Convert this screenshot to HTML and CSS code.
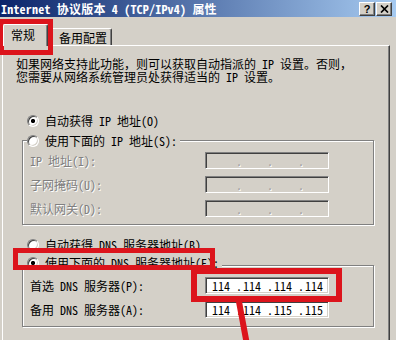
FILE: index.html
```html
<!DOCTYPE html>
<html lang="zh-CN">
<head>
<meta charset="utf-8">
<title>Internet 协议版本 4 (TCP/IPv4) 属性</title>
<link rel="stylesheet" href="styles.css">
</head>
<body>
<div class="win">
  <div class="titlebar">
    <span class="title">Internet 协议版本 4 (TCP/IPv4) 属性</span>
    <div class="tbtns">
      <span class="tbtn help">?</span>
      <span class="tbtn close"><svg width="9" height="8" viewBox="0 0 9 8"><path d="M1 0.5L8 7.5M8 0.5L1 7.5" stroke="#000" stroke-width="1.7" fill="none"/></svg></span>
    </div>
  </div>
  <div class="tabs">
    <div class="tab active">常规</div>
    <div class="tab">备用配置</div>
  </div>
  <div class="panel">
    <p class="intro">如果网络支持此功能，则可以获取自动指派的 IP 设置。否则，<br>您需要从网络系统管理员处获得适当的 IP 设置。</p>
    <div class="opt first"><span class="radio checked"></span>自动获得 IP 地址(O)</div>
    <fieldset class="group g1">
      <legend><div class="opt"><span class="radio"></span>使用下面的 IP 地址(S):</div></legend>
      <div class="rows">
        <div class="row dis"><span class="lbl">IP 地址(I):</span>
          <div class="ip off"><span class="f1"></span><span class="dot">.</span><span class="f"></span><span class="dot">.</span><span class="f"></span><span class="dot">.</span><span class="f"></span></div></div>
        <div class="row dis"><span class="lbl">子网掩码(U):</span>
          <div class="ip off"><span class="f1"></span><span class="dot">.</span><span class="f"></span><span class="dot">.</span><span class="f"></span><span class="dot">.</span><span class="f"></span></div></div>
        <div class="row dis"><span class="lbl">默认网关(D):</span>
          <div class="ip off"><span class="f1"></span><span class="dot">.</span><span class="f"></span><span class="dot">.</span><span class="f"></span><span class="dot">.</span><span class="f"></span></div></div>
      </div>
    </fieldset>
    <div class="opt second"><span class="radio"></span>自动获得 DNS 服务器地址(B)</div>
    <fieldset class="group g2">
      <legend><div class="opt"><span class="radio checked"></span>使用下面的 DNS 服务器地址(E):</div></legend>
      <div class="rows">
        <div class="row"><span class="lbl">首选 DNS 服务器(P):</span>
          <div class="ip"><span class="f1">114</span><span class="dot">.</span><span class="f">114</span><span class="dot">.</span><span class="f">114</span><span class="dot">.</span><span class="f">114</span></div></div>
        <div class="row"><span class="lbl">备用 DNS 服务器(A):</span>
          <div class="ip"><span class="f1">114</span><span class="dot">.</span><span class="f">114</span><span class="dot">.</span><span class="f">115</span><span class="dot">.</span><span class="f">115</span></div></div>
      </div>
    </fieldset>
  </div>
  <svg class="marks" width="396" height="340" viewBox="0 0 396 340">
    <g fill="none" stroke="#dc141c">
      <rect x="1.5" y="21.5" width="49" height="31" stroke-width="5"/>
      <rect x="15.5" y="250.5" width="197" height="17" stroke-width="5"/>
      <rect x="194" y="271" width="145" height="28" stroke-width="6"/>
      <line x1="238.5" y1="299" x2="246.5" y2="342" stroke-width="6"/>
    </g>
  </svg>
</div>
</body>
</html>
```
FILE: styles.css
```css
* { box-sizing: border-box; }
html, body { margin: 0; padding: 0; }
body {
  width: 396px;
  height: 340px;
  overflow: hidden;
  background: #d4d0c8;
  color: #000;
  font: 12px/13px "Noto Sans Mono CJK SC", "Noto Sans CJK SC", sans-serif;
}
.win { position: relative; width: 396px; height: 340px; overflow: hidden; }

.titlebar {
  height: 17px;
  display: flex;
  align-items: center;
  justify-content: space-between;
  padding: 0 4px 0 1px;
  background: linear-gradient(to right, #0a246a, #a6caf0);
}
.title { color: #fff; font-weight: bold; white-space: nowrap; letter-spacing: 0.2px; }
.tbtns { display: flex; gap: 1px; }
.tbtn {
  width: 16px;
  height: 14px;
  display: flex;
  align-items: center;
  justify-content: center;
  background: #d4d0c8;
  border: 1px solid;
  border-color: #fff #404040 #404040 #fff;
  box-shadow: inset -1px -1px 0 #808080;
  font: bold 11px/12px "Liberation Sans", sans-serif;
}

.tabs { display: flex; align-items: flex-end; height: 28px; padding-left: 3px; }
.tab {
  height: 17px;
  padding: 2px 4px 0 10px;
  line-height: 13px;
  white-space: nowrap;
  border-top: 1px solid #fff;
  border-left: 1px solid #fff;
  border-right: 1px solid #404040;
  box-shadow: inset -1px 0 0 #808080;
  border-radius: 2px 2px 0 0;
  background: #d4d0c8;
}
.tab.active {
  position: relative;
  z-index: 1;
  height: 22px;
  margin-bottom: -1px;
  padding: 3px 12px 0 7px;
}

.panel {
  margin-left: 2px;
  width: 388px;
  height: 296px;
  border-top: 1px solid #fff;
  border-left: 1px solid #fff;
  border-right: 1px solid #404040;
  box-shadow: inset -1px 0 0 #808080;
  padding: 11px 0 0 13px;
}
.intro { margin: 0; white-space: nowrap; line-height: 13px; }

.opt { display: flex; align-items: center; height: 13px; line-height: 13px; white-space: nowrap; }
.opt.first { margin: 31px 0 0 11px; }
.opt.second { margin: 13px 0 0 11px; }

.radio {
  flex: none;
  width: 12px;
  height: 12px;
  margin-right: 6px;
  border-radius: 50%;
  border: 1px solid;
  border-color: #808080 #fff #fff #808080;
  background: #fff;
  box-shadow: inset 1px 1px 0 #404040, inset -1px -1px 0 #d4d0c8;
}
.radio.checked { background: radial-gradient(circle, #000 0, #000 1.8px, #fff 2.4px); }

.group {
  margin: 7px 0 0 6px;
  padding: 0;
  width: 352px;
  min-width: 0;
  border: 1px solid #808080;
  box-shadow: inset 1px 1px 0 #fff, 1px 1px 0 #fff;
}
.group legend {
  margin-left: 4px;
  padding: 0 3px 0 0;
  background: #d4d0c8;
}
.group.g2 { margin-top: 5px; }
.group.g2 legend { padding-bottom: 6px; background: none; }
.group.g2 legend .opt { background: #d4d0c8; padding-right: 3px; margin-right: -3px; }
.rows { padding: 5px 0 7px 7px; }
.g2 .rows { padding: 2px 0 8px 7px; }
.row {
  display: grid;
  grid-template-columns: 175px 124px;
  align-items: center;
  height: 17px;
}
.row + .row { margin-top: 7px; }
.lbl { white-space: nowrap; }
.row.dis .lbl { color: #808080; text-shadow: 1px 1px 0 #fff; }

.ip {
  display: flex;
  width: 124px;
  height: 17px;
  overflow: hidden;
  line-height: 15px;
  background: #fff;
  border: 1px solid;
  border-color: #808080 #fff #fff #808080;
  box-shadow: inset 1px 1px 0 #404040, inset -1px -1px 0 #d4d0c8;
  white-space: nowrap;
}
.ip .f1 { flex: none; width: 30px; padding-left: 6px; }
.ip .dot { flex: none; width: 6px; text-align: center; }
.ip .f { flex: none; width: 25px; padding-left: 1px; }
.ip.off { background: #d4d0c8; }
.ip.off .dot { color: #a0a0a0; text-shadow: 1px 1px 0 #fff; }

.marks { position: absolute; left: 0; top: 0; pointer-events: none; }
```
